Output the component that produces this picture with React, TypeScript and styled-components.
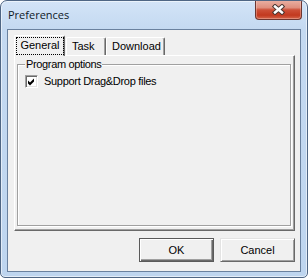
import React from "react";
import styled, { createGlobalStyle } from "styled-components";

const GlobalStyle = createGlobalStyle`
  html, body { margin: 0; padding: 0; background: #ffffff; }
  body { font-family: "Liberation Sans", Arial, sans-serif; }
  * { box-sizing: border-box; }
`;

const Window = styled.div`
  width: 308px;
  height: 278px;
  border: 1px solid #4f6684;
  border-radius: 7px 7px 5px 5px;
  background: linear-gradient(to bottom, #d3e4f7 0px, #c4d9f1 28px, #bed5ef 100%);
  box-shadow: inset 0 0 0 1px rgba(255, 255, 255, 0.55);
  display: flex;
  flex-direction: column;
  overflow: hidden;
`;

const TitleBar = styled.div`
  height: 28px;
  flex: none;
  display: flex;
  justify-content: space-between;
  align-items: flex-start;
  padding: 0 5px 0 7px;
`;

const Title = styled.div`
  font-family: "Open Sans", "Liberation Sans", sans-serif;
  font-size: 11px;
  line-height: 15px;
  color: #0f1a28;
  padding-top: 6px;
`;

const CloseButton = styled.div`
  width: 47px;
  height: 20px;
  margin-top: -1px;
  border: 1px solid #6d3630;
  border-top: none;
  border-radius: 0 0 4px 4px;
  background: linear-gradient(
    to bottom,
    #eab2a5 0%,
    #df8f7e 40%,
    #cd5038 52%,
    #c2391f 80%,
    #d4654b 100%
  );
  box-shadow: inset 0 0 0 1px rgba(255, 220, 210, 0.35);
  display: flex;
  align-items: center;
  justify-content: center;
`;

const Frame = styled.div`
  flex: 1;
  display: flex;
  padding: 0 6px 5px 6px;
`;

const Client = styled.div`
  flex: 1;
  display: flex;
  flex-direction: column;
  border: 1px solid #6a819f;
  background: #f0f0f0;
  padding: 5px 5px 0 6px;
  font-size: 11px;
  line-height: 13px;
  color: #000;
`;

const TabStrip = styled.div`
  height: 20px;
  flex: none;
  display: flex;
  align-items: flex-end;
`;

const Tab = styled.div<{ $selected?: boolean; $width: number; $gap?: number }>`
  position: relative;
  z-index: ${(p) => (p.$selected ? 2 : 0)};
  width: ${(p) => p.$width}px;
  height: ${(p) => (p.$selected ? 21 : 18)}px;
  margin-left: ${(p) => p.$gap ?? 0}px;
  margin-bottom: ${(p) => (p.$selected ? -1 : 0)}px;
  background: #f0f0f0;
  border-top: 1px solid #ffffff;
  border-left: 1px solid #ffffff;
  border-right: 1px solid #696969;
  border-radius: 2px 2px 0 0;
  box-shadow: inset -1px 0 0 #a0a0a0;
  display: flex;
  padding: ${(p) => (p.$selected ? "1px 0 1px 1px" : "0 0 0 5px")};
  align-items: center;
`;

const FocusRing = styled.div`
  flex: 1;
  align-self: stretch;
  border: 1px dotted #000;
  display: flex;
  align-items: center;
  justify-content: center;
  padding-bottom: 1px;
`;

const TabLabel = styled.span`
  white-space: nowrap;
`;

const TabPanel = styled.div`
  height: 176px;
  flex: none;
  border-top: 1px solid #ffffff;
  border-left: 1px solid #ffffff;
  border-right: 1px solid #696969;
  border-bottom: 1px solid #696969;
  box-shadow: inset -1px -1px 0 #a0a0a0;
  display: flex;
  flex-direction: column;
  padding: 8px 3px 0 2px;
`;

const GroupBox = styled.div`
  position: relative;
  height: 162px;
  flex: none;
  border: 1px solid #a0a0a0;
  box-shadow: inset 1px 1px 0 #ffffff, 1px 1px 0 #ffffff;
  padding: 10px 7px 0 7px;
  display: flex;
  flex-direction: column;
  align-items: flex-start;
`;

const Legend = styled.span`
  position: absolute;
  top: -7px;
  left: 7px;
  padding: 0 1px;
  background: #f0f0f0;
  letter-spacing: -0.35px;
  white-space: nowrap;
`;

const CheckRow = styled.div`
  display: flex;
  align-items: center;
  gap: 6px;
  height: 13px;
`;

const CheckBox = styled.span`
  width: 13px;
  height: 13px;
  flex: none;
  background: #ffffff;
  border-top: 1px solid #a0a0a0;
  border-left: 1px solid #a0a0a0;
  border-right: 1px solid #ffffff;
  border-bottom: 1px solid #ffffff;
  box-shadow: inset 1px 1px 0 #696969, inset -1px -1px 0 #e3e3e3;
  display: flex;
`;

const CheckText = styled.span`
  letter-spacing: -0.3px;
  white-space: nowrap;
`;

const ButtonRow = styled.div`
  display: flex;
  justify-content: flex-end;
  gap: 6px;
  margin-top: 7px;
`;

const Button = styled.div<{ $default?: boolean }>`
  width: 75px;
  height: 24px;
  display: flex;
  align-items: center;
  justify-content: center;
  background: #f0f0f0;
  ${(p) =>
    p.$default
      ? `
    border: 1px solid #5a5a5a;
    box-shadow: inset 1px 1px 0 #ffffff, inset -1px -1px 0 #696969, inset -2px -2px 0 #a0a0a0;
  `
      : `
    border-top: 1px solid #e3e3e3;
    border-left: 1px solid #e3e3e3;
    border-right: 1px solid #696969;
    border-bottom: 1px solid #696969;
    box-shadow: inset 1px 1px 0 #ffffff, inset -1px -1px 0 #a0a0a0;
  `}
`;

const CloseGlyph = () => (
  <svg width="13" height="11" viewBox="0 0 13 11">
    <path d="M3 2.5 L10 8.5 M10 2.5 L3 8.5" stroke="#4a3530" strokeWidth="4.4" strokeLinecap="square" />
    <path d="M3 2.5 L10 8.5 M10 2.5 L3 8.5" stroke="#ffffff" strokeWidth="2.4" strokeLinecap="square" />
  </svg>
);

const CheckMark = () => (
  <svg width="11" height="11" viewBox="0 0 11 11">
    <polygon points="2,4.5 4,6.5 8,2.5 8,5.5 4,9.5 2,7.5" fill="#000" />
  </svg>
);

export default function App() {
  return (
    <>
      <GlobalStyle />
      <Window>
        <TitleBar>
          <Title>Preferences</Title>
          <CloseButton>
            <CloseGlyph />
          </CloseButton>
        </TitleBar>
        <Frame>
          <Client>
            <TabStrip>
              <Tab $selected $width={51}>
                <FocusRing>
                  <TabLabel>General</TabLabel>
                </FocusRing>
              </Tab>
              <Tab $width={40} $gap={1}>
                <TabLabel>Task</TabLabel>
              </Tab>
              <Tab $width={59}>
                <TabLabel>Download</TabLabel>
              </Tab>
            </TabStrip>
            <TabPanel>
              <GroupBox>
                <Legend>Program options</Legend>
                <CheckRow>
                  <CheckBox>
                    <CheckMark />
                  </CheckBox>
                  <CheckText>Support Drag&amp;Drop files</CheckText>
                </CheckRow>
              </GroupBox>
            </TabPanel>
            <ButtonRow>
              <Button $default>OK</Button>
              <Button>Cancel</Button>
            </ButtonRow>
          </Client>
        </Frame>
      </Window>
    </>
  );
}
